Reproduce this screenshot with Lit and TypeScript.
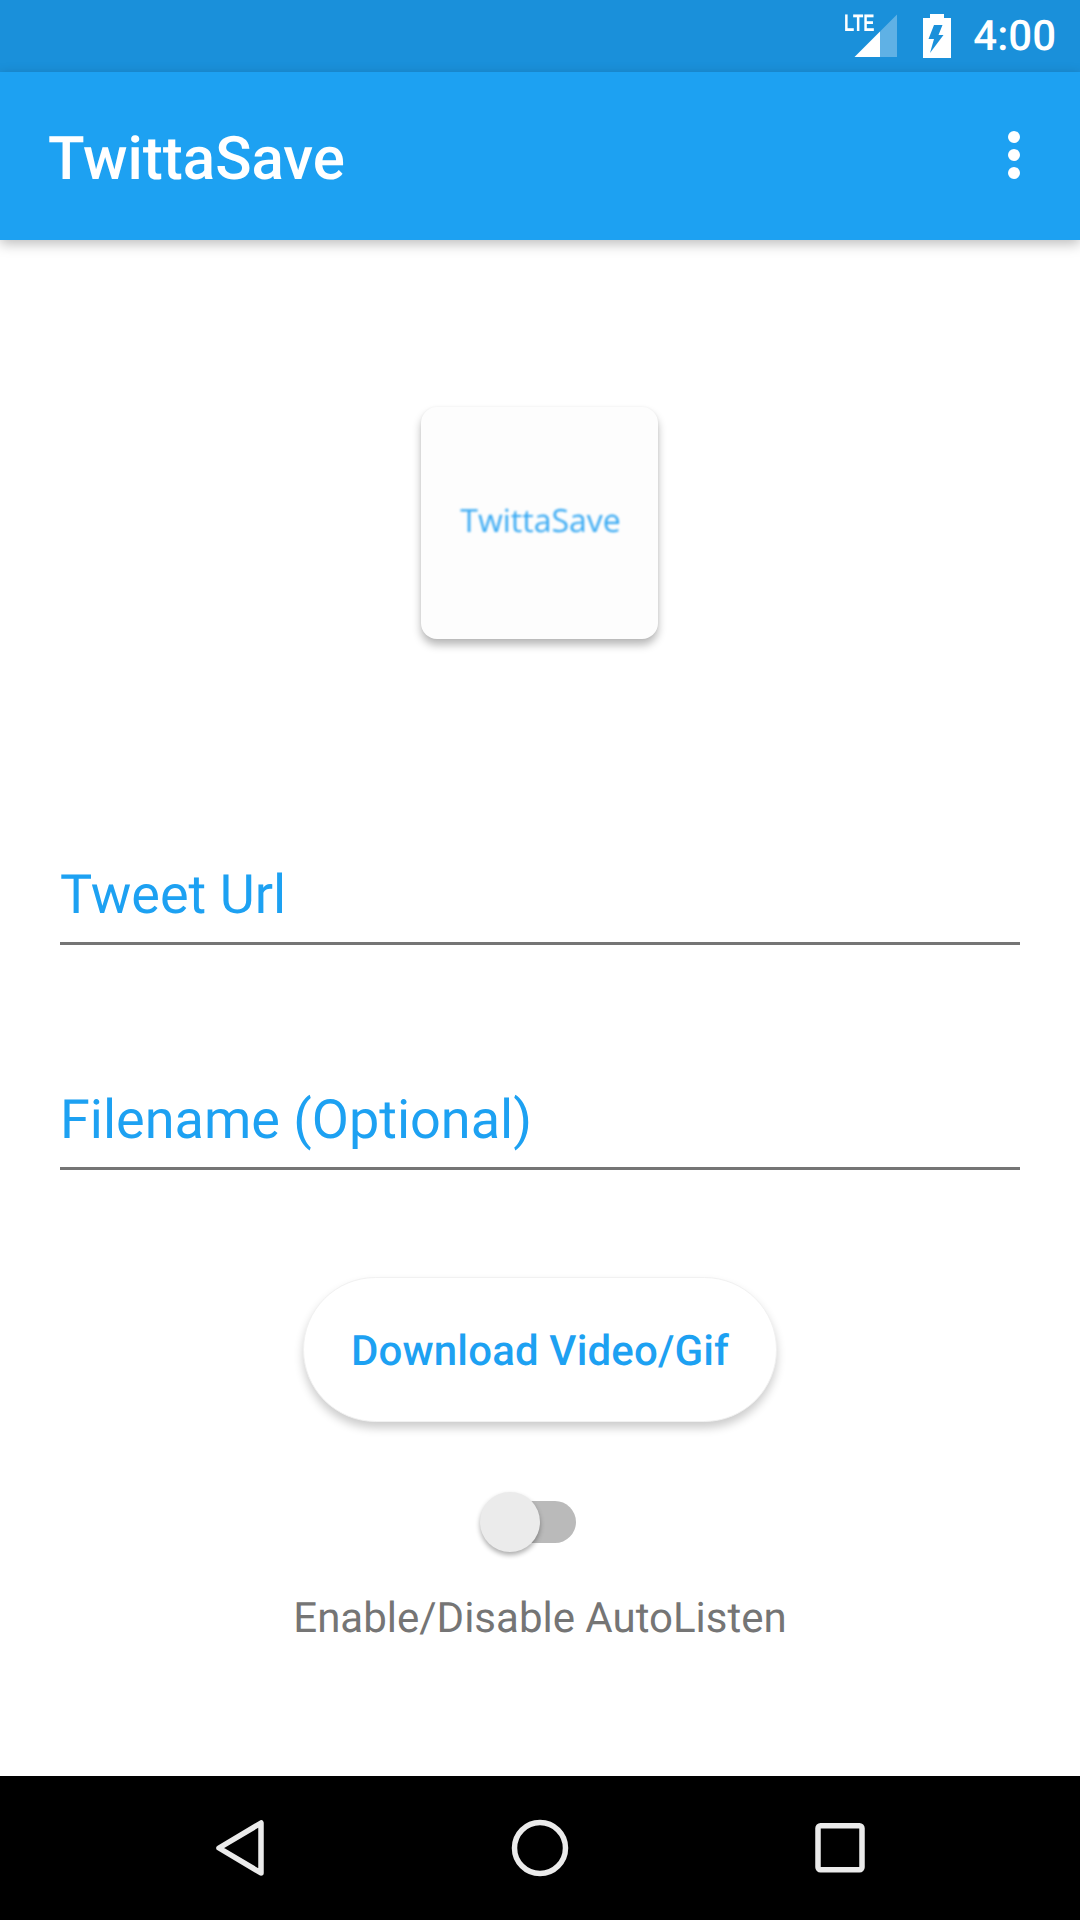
import { LitElement, html, css } from 'lit'
import { customElement } from 'lit/decorators.js'

@customElement('app-root')
class App extends LitElement {
  static styles = css`
    :host {
      display: flex;
      flex-direction: column;
      width: 1080px;
      height: 1920px;
      background: #fff;
      font-family: Roboto, 'Liberation Sans', sans-serif;
      text-rendering: geometricPrecision;
      overflow: hidden;
    }
    .status {
      height: 72px;
      flex: none;
      background: #1a90da;
      display: flex;
      align-items: flex-start;
      justify-content: flex-end;
      color: #fff;
    }
    .signal {
      position: relative;
      width: 53px;
      height: 72px;
      margin-right: 26px;
    }
    .signal svg {
      position: absolute;
      left: 10px;
      top: 14px;
    }
    .lte {
      position: absolute;
      left: 0;
      top: 11px;
      font: 700 24px/26px 'Liberation Sans', sans-serif;
      transform: scaleX(0.7);
      transform-origin: left top;
    }
    .battery {
      margin-top: 14px;
      margin-right: 22px;
    }
    .time {
      font-size: 42px;
      font-weight: 500;
      line-height: 74px;
      margin-right: 24px;
    }
    .appbar {
      height: 168px;
      flex: none;
      background: #1da1f2;
      box-shadow: 0 4px 12px rgba(0, 0, 0, 0.26);
      display: flex;
      align-items: center;
      justify-content: space-between;
      padding: 0 60px 0 48px;
      color: #fff;
      position: relative;
    }
    .title {
      font-size: 60px;
      font-weight: 500;
      line-height: 168px;
      padding-top: 6px;
    }
    .dots {
      display: flex;
      flex-direction: column;
      gap: 6px;
      margin-bottom: 2px;
    }
    .dots i {
      width: 12px;
      height: 12px;
      border-radius: 50%;
      background: #fff;
    }
    .content {
      flex: 1;
      display: flex;
      flex-direction: column;
      align-items: center;
    }
    .logo {
      width: 237px;
      height: 232px;
      margin-top: 167px;
      margin-right: 1px;
      border-radius: 16px;
      background: #fdfdfd;
      box-shadow: 0 6px 9px rgba(0, 0, 0, 0.28), 0 0 3px rgba(0, 0, 0, 0.05);
      display: flex;
      align-items: center;
      justify-content: center;
    }
    .logo span {
      font: 400 32px 'Open Sans', sans-serif;
      color: #37a9f3;
      filter: blur(0.8px);
      margin-bottom: 6px;
      margin-left: 2px;
    }
    .field {
      box-sizing: border-box;
      width: 960px;
      border-bottom: 3px solid #757575;
      font-size: 54px;
      line-height: 66px;
      color: #1da1f2;
    }
    .field.first {
      height: 84px;
      margin-top: 222px;
      padding-top: 2px;
    }
    .field.second {
      height: 83px;
      margin-top: 142px;
      padding-top: 1px;
    }
    .btn {
      box-sizing: border-box;
      width: 474px;
      height: 145px;
      margin-top: 107px;
      padding-top: 4px;
      border-radius: 73px;
      border: 1px solid #f1f1f1;
      background: #fff;
      box-shadow: 0 6px 10px rgba(0, 0, 0, 0.2);
      color: #1da1f2;
      font-size: 42px;
      font-weight: 500;
      letter-spacing: 0.15px;
      display: flex;
      align-items: center;
      justify-content: center;
    }
    .switch {
      position: relative;
      width: 96px;
      height: 60px;
      margin-top: 70px;
      margin-right: 24px;
    }
    .track {
      position: absolute;
      right: 0;
      top: 9px;
      width: 84px;
      height: 42px;
      border-radius: 21px;
      background: #bababa;
    }
    .thumb {
      position: absolute;
      left: 0;
      top: 0;
      width: 60px;
      height: 60px;
      border-radius: 50%;
      background: #ebebeb;
      box-shadow: 0 3px 5px rgba(0, 0, 0, 0.32);
    }
    .caption {
      margin-top: 41px;
      font-size: 42px;
      line-height: 52px;
      color: #757575;
    }
    .nav {
      height: 144px;
      flex: none;
      background: #000;
      position: relative;
      display: block;
    }
  `

  render() {
    return html`
      <div class="status">
        <div class="signal">
          <span class="lte">LTE</span>
          <svg width="43" height="44" viewBox="0 0 43 44">
            <path d="M43 0.5V43H26V17.5Z" fill="#fff" opacity="0.3" />
            <path d="M0.5 43L26 17.5V43Z" fill="#fff" />
          </svg>
        </div>
        <svg class="battery" width="28" height="44" viewBox="0 0 28 44">
          <path d="M7 0H21V4H28V44H0V4H7Z" fill="#fff" />
          <path d="M11 11H19.5L15.5 21H20.5L7 39L11 25H5.5Z" fill="#1a90da" />
        </svg>
        <span class="time">4:00</span>
      </div>
      <div class="appbar">
        <span class="title">TwittaSave</span>
        <div class="dots"><i></i><i></i><i></i></div>
      </div>
      <div class="content">
        <div class="logo"><span>TwittaSave</span></div>
        <div class="field first">Tweet Url</div>
        <div class="field second">Filename (Optional)</div>
        <div class="btn">Download Video/Gif</div>
        <div class="switch">
          <div class="track"></div>
          <div class="thumb"></div>
        </div>
        <div class="caption">Enable/Disable AutoListen</div>
      </div>
      <svg class="nav" width="1080" height="144" viewBox="0 0 1080 144">
        <path
          d="M261 47V97L219 72Z"
          fill="none"
          stroke="#ebebeb"
          stroke-width="5.5"
          stroke-linejoin="round"
        />
        <circle cx="540" cy="72" r="25.5" fill="none" stroke="#ebebeb" stroke-width="5.5" />
        <rect
          x="818"
          y="49.75"
          width="44"
          height="44"
          rx="2.5"
          fill="none"
          stroke="#ebebeb"
          stroke-width="5.5"
        />
      </svg>
    `
  }
}
export default App
